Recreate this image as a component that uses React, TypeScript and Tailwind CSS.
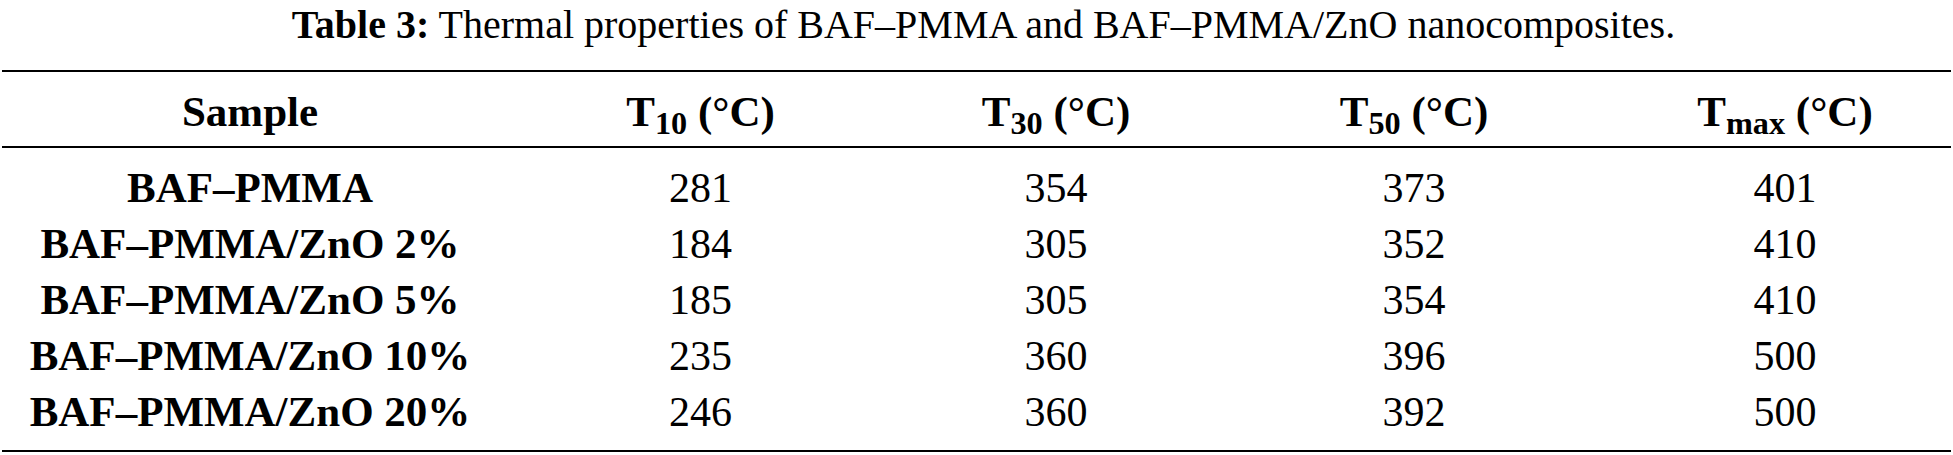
import React from "react";

const rows = [
  ["BAF–PMMA", "281", "354", "373", "401"],
  ["BAF–PMMA/ZnO 2%", "184", "305", "352", "410"],
  ["BAF–PMMA/ZnO 5%", "185", "305", "354", "410"],
  ["BAF–PMMA/ZnO 10%", "235", "360", "396", "500"],
  ["BAF–PMMA/ZnO 20%", "246", "360", "392", "500"],
];

const Temp = ({ sub }: { sub: string }) => (
  <span>
    T<sub>{sub}</sub> (°C)
  </span>
);

const App = () => {
  return (
    <div className="w-[1953px] h-[455px] overflow-hidden bg-white text-black font-['Liberation_Serif',serif]">
      {/* Caption */}
      <p className="pl-[14px] pt-[5px] text-center text-[40px] leading-[40px]">
        <b>Table 3:</b> Thermal properties of BAF–PMMA and BAF–PMMA/ZnO nanocomposites.
      </p>

      {/* Table */}
      <div className="mx-[2px] mt-[25px] border-t-2 border-b-2 border-black">
        <div className="grid grid-cols-[496px_405px_306px_410px_1fr] border-b-2 border-black pt-[12px] pb-[6px] text-center text-[43px] font-bold leading-[56px]">
          <div>Sample</div>
          <Temp sub="10" />
          <Temp sub="30" />
          <Temp sub="50" />
          <Temp sub="max" />
        </div>

        <div className="pt-[12px] pb-[10px]">
          {rows.map((r) => (
            <div
              key={r[0]}
              className="grid grid-cols-[496px_405px_306px_410px_1fr] text-center text-[42px] leading-[56px]"
            >
              <div className="font-bold text-[43px]">{r[0]}</div>
              <div>{r[1]}</div>
              <div>{r[2]}</div>
              <div>{r[3]}</div>
              <div>{r[4]}</div>
            </div>
          ))}
        </div>
      </div>
    </div>
  );
};

export default App;
